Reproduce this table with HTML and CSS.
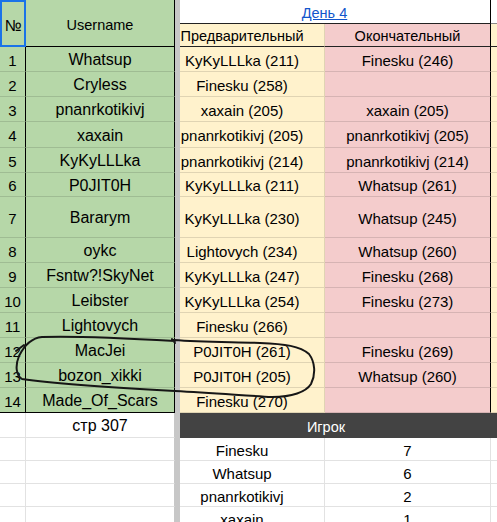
FILE: index.html
```html
<!DOCTYPE html>
<html lang="ru">
<head>
<meta charset="utf-8">
<title>День 4</title>
<link rel="stylesheet" href="styles.css">
</head>
<body>
<div class="sheet">
  <div class="c a hd sel">№</div>
  <div class="c b hd">Username</div>
  <div class="freeze"></div>
  <div class="c day"><a href="#">День 4</a></div>
  <div class="c e top"></div>
  <div class="c p hd2">Предварительный</div>
  <div class="c f hd2">Окончательный</div>
  <div class="c e hd2"></div>

  <div class="c a">1</div><div class="c b">Whatsup</div><div class="c p">KyKyLLLka (211)</div><div class="c f">Finesku (246)</div><div class="c e"></div>
  <div class="c a">2</div><div class="c b">Cryless</div><div class="c p">Finesku (258)</div><div class="c f"></div><div class="c e"></div>
  <div class="c a">3</div><div class="c b">pnanrkotikivj</div><div class="c p">xaxain (205)</div><div class="c f">xaxain (205)</div><div class="c e"></div>
  <div class="c a">4</div><div class="c b">xaxain</div><div class="c p">pnanrkotikivj (205)</div><div class="c f">pnanrkotikivj (205)</div><div class="c e"></div>
  <div class="c a">5</div><div class="c b">KyKyLLLka</div><div class="c p">pnanrkotikivj (214)</div><div class="c f">pnanrkotikivj (214)</div><div class="c e"></div>
  <div class="c a">6</div><div class="c b">P0JIT0H</div><div class="c p">KyKyLLLka (211)</div><div class="c f">Whatsup (261)</div><div class="c e"></div>
  <div class="c a">7</div><div class="c b">Bararym</div><div class="c p">KyKyLLLka (230)</div><div class="c f">Whatsup (245)</div><div class="c e"></div>
  <div class="c a">8</div><div class="c b">oykc</div><div class="c p">Lightovych (234)</div><div class="c f">Whatsup (260)</div><div class="c e"></div>
  <div class="c a">9</div><div class="c b">Fsntw?!SkyNet</div><div class="c p">KyKyLLLka (247)</div><div class="c f">Finesku (268)</div><div class="c e"></div>
  <div class="c a">10</div><div class="c b">Leibster</div><div class="c p">KyKyLLLka (254)</div><div class="c f">Finesku (273)</div><div class="c e"></div>
  <div class="c a">11</div><div class="c b">Lightovych</div><div class="c p">Finesku (266)</div><div class="c f"></div><div class="c e"></div>
  <div class="c a">12</div><div class="c b">MacJei</div><div class="c p">P0JIT0H (261)</div><div class="c f">Finesku (269)</div><div class="c e"></div>
  <div class="c a">13</div><div class="c b">bozon_xikki</div><div class="c p">P0JIT0H (205)</div><div class="c f">Whatsup (260)</div><div class="c e"></div>
  <div class="c a last">14</div><div class="c b last">Made_Of_Scars</div><div class="c p">Finesku (270)</div><div class="c f"></div><div class="c e"></div>

  <div class="c wa"></div><div class="c wb">стр 307</div><div class="c pivot-head">Игрок</div>
  <div class="c wa"></div><div class="c wb"></div><div class="c wn">Finesku</div><div class="c wv">7</div><div class="c we"></div>
  <div class="c wa"></div><div class="c wb"></div><div class="c wn">Whatsup</div><div class="c wv">6</div><div class="c we"></div>
  <div class="c wa"></div><div class="c wb"></div><div class="c wn">pnanrkotikivj</div><div class="c wv">2</div><div class="c we"></div>
  <div class="c wa"></div><div class="c wb"></div><div class="c wn">xaxain</div><div class="c wv">1</div><div class="c we"></div>

  <svg class="ink" width="497" height="522" viewBox="0 0 497 522">
    <path d="M175,341 C140,339 70,336 42,337 C31,338 24,346 19,356 C15,366 16,375 22,379 C50,383 120,388 175,391 C215,393 250,396 272,397 C292,397 306,392 311,384 C316,374 315,362 309,354 C300,346 285,344 260,343 C230,342 200,342 174,340 M172,339 L175,343 M24,345 L16,351" fill="none" stroke="#161616" stroke-width="2" stroke-linecap="round" stroke-linejoin="round"/>
  </svg>
</div>
</body>
</html>
```

FILE: styles.css
```css
html, body {
  margin: 0;
  padding: 0;
  background: #ffffff;
}

body {
  overflow: hidden;
  font-family: "Liberation Sans", Arial, sans-serif;
  color: #000;
}

.sheet {
  position: relative;
  display: grid;
  grid-template-columns: 26px 149px 5px 145px 166px 6px;
  grid-template-rows: 24px 23px 25px 25px 25px 26px 25px 24px 41px 25px 25px 25px 25px 25px 25px 25px 25px 23px 23px 23px 23px;
  width: 497px;
  height: 522px;
  overflow: hidden;
}

.c {
  box-sizing: border-box;
  display: flex;
  align-items: center;
  justify-content: center;
  white-space: nowrap;
  overflow: hidden;
  padding-top: 2px;
  border-right: 1px solid rgba(0, 0, 0, 0.12);
  border-bottom: 1px solid rgba(0, 0, 0, 0.12);
  font-size: 15px;
}

.freeze {
  grid-column: 3;
  grid-row: 1 / -1;
  background: #c7c7c7;
}

/* column A: row numbers */
.a {
  background: #b6d7a8;
  border-right-color: #000;
  font-size: 15px;
}

/* column B: usernames */
.b {
  background: #b6d7a8;
  border-right-color: #000;
  font-size: 16px;
}

.hd {
  grid-row: span 2;
  font-size: 14.5px;
  padding-top: 4px;
  border-bottom-color: #000;
}

.sel {
  border: 2px solid #1a73e8;
  font-size: 16px;
}

.last {
  border-bottom-color: #000;
}

/* column C: preliminary */
.p {
  background: #fff2cc;
  padding-right: 20px;
}

/* column D: final */
.f {
  background: #f4cccc;
  border-right-color: #000;
}

/* column E: narrow tail */
.e {
  background: #fff2cc;
  border-right: 0;
}

.e.top {
  background: #ffffff;
  border-bottom-color: #8a8a8a;
}

.day {
  grid-column: span 2;
  background: #ffffff;
  border-right-color: #000;
  border-bottom-color: #222;
  padding-right: 21px;
  font-size: 14.5px;
}

.day a {
  color: #1155cc;
  text-decoration: underline;
}

.hd2 {
  font-size: 14.5px;
  border-bottom-color: #222;
}

/* lower white area */
.wa,
.wb,
.wn,
.wv,
.we {
  background: #ffffff;
  border-right-color: #e2e2e2;
  border-bottom-color: #e2e2e2;
}

.wb {
  font-size: 16px;
  border-right-color: #c7c7c7;
}

.wn {
  padding-right: 20px;
}

.we {
  border-right: 0;
}

.pivot-head {
  grid-column: span 3;
  background: #434343;
  color: #ffffff;
  border: 0;
  padding-right: 25px;
  font-size: 14.5px;
}

.ink {
  position: absolute;
  left: 0;
  top: 0;
  pointer-events: none;
}
```
